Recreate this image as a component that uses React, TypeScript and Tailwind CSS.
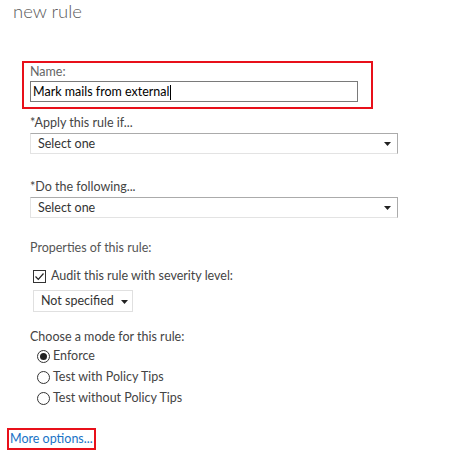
import React from 'react';

const font = { fontFamily: 'Lato, "Noto Sans", sans-serif' };

// Small black dropdown caret
const Caret = () => (
  <svg width="7" height="4" viewBox="0 0 7 4" className="shrink-0">
    <path d="M0 0 H7 L3.5 4 Z" fill="#222" />
  </svg>
);

interface SelectProps {
  text: string;
}

const SelectBox: React.FC<SelectProps> = ({ text }) => (
  <div className="flex items-center justify-between h-[21px] w-[368px] border border-[#ababab] border-l-[#e3e3e3] border-b-[#e3e3e3] pl-[7px] pr-[6px] pt-[1px] text-[12.5px] text-[#333] bg-white">
    <span>{text}</span>
    <Caret />
  </div>
);

const Radio: React.FC<{ checked?: boolean; label: string }> = ({ checked, label }) => (
  <div className="flex items-center h-[21px] ml-[7px]">
    <span className="flex items-center justify-center w-[13px] h-[13px] rounded-full border border-[#333] bg-white">
      {checked && <span className="w-[7px] h-[7px] rounded-full bg-[#222]" />}
    </span>
    <span className="ml-[3px] text-[12.5px] text-[#444]">{label}</span>
  </div>
);

export default function App() {
  return (
    <div className="w-[469px] h-[463px] bg-white overflow-hidden" style={font}>
      <div className="pl-[13px] h-[24px] pt-[1px] text-[18.5px] leading-[20px] font-light text-[#5a5a5a] whitespace-nowrap">new rule</div>

      {/* Name box with red highlight */}
      <div className="ml-[22px] mt-[37px] w-[351px] h-[48px] border-2 border-[#e8101a] pl-[6px] pt-[1px]">
        <div className="text-[12.5px] leading-[16px] text-[#666]">Name:</div>
        <div className="mt-[1px] w-[328px] h-[21px] border border-[#7a7a7a] flex items-center pl-[2px] pt-[1px] text-[12.5px] text-black">
          Mark mails from external<span className="inline-block w-px h-[15px] bg-black" />
        </div>
      </div>

      <div className="ml-[30px]">
        <div className="mt-[6px] text-[12.5px] leading-[16px] text-[#444]">*Apply this rule if...</div>
        <div className="mt-[2px]">
          <SelectBox text="Select one" />
        </div>

        <div className="mt-[25px] text-[12.5px] leading-[16px] text-[#444]">*Do the following...</div>
        <div className="mt-[2px]">
          <SelectBox text="Select one" />
        </div>

        <div className="mt-[22px] text-[12.5px] leading-[16px] text-[#555]">Properties of this rule:</div>

        <div className="mt-[12px] flex items-center h-[16px] ml-[3px]">
          <span className="w-[13px] h-[13px] border border-[#333] bg-white flex items-center justify-center">
            <svg width="11" height="11" viewBox="0 0 11 11">
              <path d="M1.5 5.5 L4.3 8.3 L9.5 2.5" fill="none" stroke="#222" strokeWidth="1.2" />
            </svg>
          </span>
          <span className="ml-[5px] text-[12.5px] text-[#444]">Audit this rule with severity level:</span>
        </div>

        <div className="mt-[6px] ml-[3px] flex items-center justify-between w-[100px] h-[22px] border border-[#e0e0e0] pl-[7px] pr-[4px] pt-[1px] text-[12.5px] text-[#333] whitespace-nowrap">
          <span>Not specified</span>
          <Caret />
        </div>

        <div className="mt-[17px] text-[12.5px] leading-[16px] text-[#444]">Choose a mode for this rule:</div>
        <div className="mt-[1px]">
          <Radio checked label="Enforce" />
          <Radio label="Test with Policy Tips" />
          <Radio label="Test without Policy Tips" />
        </div>
      </div>

      <div className="ml-[7px] mt-[19px] inline-flex items-center h-[22px] border-2 border-[#e8101a] px-[1px] text-[12.5px] text-[#1a73c6] whitespace-nowrap">
        More options...
      </div>
    </div>
  );
}
